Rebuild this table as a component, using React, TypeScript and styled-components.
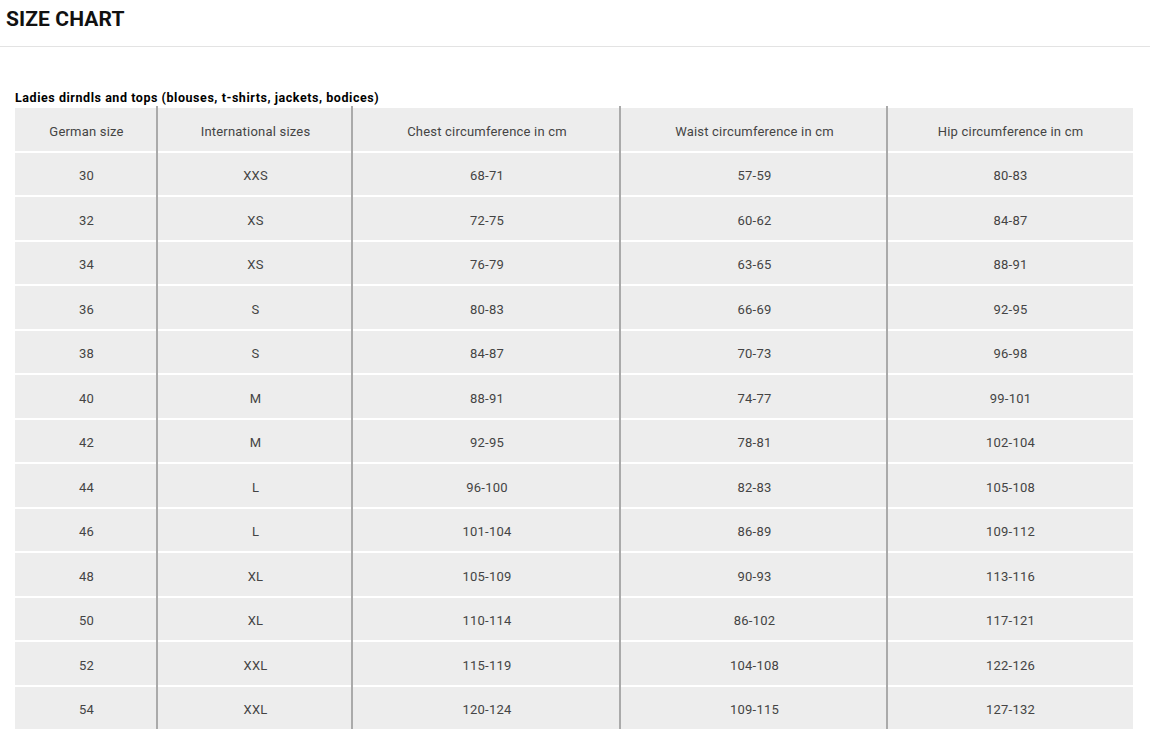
import React from "react";
import styled, { createGlobalStyle } from "styled-components";

const Global = createGlobalStyle`
  html, body { margin: 0; padding: 0; background: #fff; }
  body { font-family: Roboto, "Liberation Sans", sans-serif; color: #333; }
`;

const Page = styled.div`
  width: 1150px;
`;

const Header = styled.header`
  height: 47px;
  border-bottom: 1px solid #e3e3e3;
  box-sizing: border-box;
  padding: 7px 0 0 6px;
`;

const Title = styled.h1`
  margin: 0;
  font-size: 21px;
  font-weight: 700;
  color: #111;
  letter-spacing: 0.1px;
  line-height: 24px;
`;

const Section = styled.section`
  padding: 43px 17px 0 15px;
`;

const Caption = styled.h2`
  margin: 0;
  font-size: 12.5px;
  font-weight: 700;
  color: #000;
  letter-spacing: 0.55px;
  line-height: 16px;
`;

const Table = styled.table`
  width: 1118px;
  border-collapse: collapse;
  table-layout: fixed;
`;

const Row = styled.tr`
  height: 44.5px;
`;

const Cell = styled.td<{ $last?: boolean }>`
  padding: 6px 0 0 0;
  text-align: center;
  vertical-align: middle;
  font-size: 13px;
  font-weight: 400;
  color: #444;
  letter-spacing: 0.2px;
  background:
    ${(p) =>
      p.$last
        ? ""
        : "linear-gradient(to right, transparent calc(100% - 2px), #aaa calc(100% - 2px)),"}
    linear-gradient(to bottom, #fff 2px, #ededed 2px);
`;

const widths = [143, 195, 268, 267, 245];

const head = [
  "German size",
  "International sizes",
  "Chest circumference in cm",
  "Waist circumference in cm",
  "Hip circumference in cm",
];

const rows: string[][] = [
  ["30", "XXS", "68-71", "57-59", "80-83"],
  ["32", "XS", "72-75", "60-62", "84-87"],
  ["34", "XS", "76-79", "63-65", "88-91"],
  ["36", "S", "80-83", "66-69", "92-95"],
  ["38", "S", "84-87", "70-73", "96-98"],
  ["40", "M", "88-91", "74-77", "99-101"],
  ["42", "M", "92-95", "78-81", "102-104"],
  ["44", "L", "96-100", "82-83", "105-108"],
  ["46", "L", "101-104", "86-89", "109-112"],
  ["48", "XL", "105-109", "90-93", "113-116"],
  ["50", "XL", "110-114", "86-102", "117-121"],
  ["52", "XXL", "115-119", "104-108", "122-126"],
  ["54", "XXL", "120-124", "109-115", "127-132"],
];

export default function App() {
  return (
    <Page>
      <Global />
      <Header>
        <Title>SIZE CHART</Title>
      </Header>
      <Section>
        <Caption>Ladies dirndls and tops (blouses, t-shirts, jackets, bodices)</Caption>
        <Table>
          <colgroup>
            {widths.map((w, i) => (
              <col key={i} style={{ width: w }} />
            ))}
          </colgroup>
          <tbody>
            <Row>
              {head.map((h, i) => (
                <Cell key={i} $last={i === 4}>
                  {h}
                </Cell>
              ))}
            </Row>
            {rows.map((r, ri) => (
              <Row key={ri}>
                {r.map((c, i) => (
                  <Cell key={i} $last={i === 4}>
                    {c}
                  </Cell>
                ))}
              </Row>
            ))}
          </tbody>
        </Table>
      </Section>
    </Page>
  );
}
